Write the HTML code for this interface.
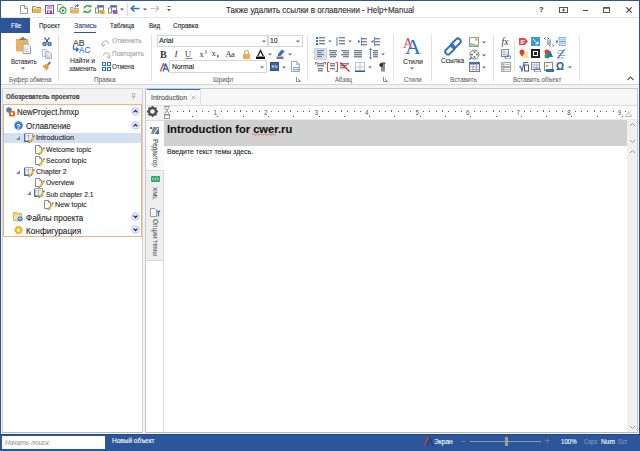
<!DOCTYPE html>
<html><head><meta charset="utf-8">
<style>
*{margin:0;padding:0;box-sizing:border-box}
html,body{width:640px;height:451px;overflow:hidden;background:#fff;font-family:"Liberation Sans",sans-serif;color:#222}
.a{position:absolute;display:block}
.t{position:absolute;white-space:nowrap;line-height:1;-webkit-text-stroke:0.1px currentColor}
</style></head><body>
<div class="a" style="left:0px;top:0px;width:640px;height:451px;background:#fff;"></div>
<div class="a" style="left:1px;top:85px;width:638px;height:349px;background:#f4f4f4;"></div>
<div class="a" style="left:0px;top:0px;width:640px;height:1px;background:#2b579a;"></div>
<div class="a" style="left:0px;top:0px;width:1px;height:451px;background:#2b579a;"></div>
<div class="a" style="left:639px;top:0px;width:1px;height:451px;background:#2b579a;"></div>
<div class="a" style="left:1px;top:17px;width:638px;height:1px;background:#e6e6e6;"></div>
<div class="t" style="left:226px;top:6px;font-size:8.4px;color:#2a2a2a;font-weight:normal;font-style:normal;transform:scaleX(0.951);transform-origin:0 0;">Также удалить ссылки в оглавлении - Help+Manual</div>
<svg class="a" style="left:20px;top:5px;" width="8" height="9" viewBox="0 0 8 9"><path d="M0.5 0.5H5L7.5 3V8.5H0.5Z" fill="#fff" stroke="#9a9a9a"/><path d="M4.5 0.5V3.5H7.5" fill="none" stroke="#9a9a9a"/></svg>
<svg class="a" style="left:32px;top:5px;" width="10" height="8" viewBox="0 0 10 8"><path d="M0.5 1.5H3.5L4.5 2.5H8.5V7.5H0.5Z" fill="#eee" stroke="#8a8a8a"/><path d="M1.5 3.5H9.8L8.8 7.8H0.5Z" fill="#f0b24a"/></svg>
<svg class="a" style="left:45px;top:5px;" width="9" height="9" viewBox="0 0 9 9"><rect x="0.5" y="0.5" width="8" height="8" fill="#fff" stroke="#8a4bb0" stroke-width="1.1"/><rect x="2" y="0.5" width="5" height="3.5" fill="#c9a6dd"/><rect x="2" y="5.5" width="5" height="3" fill="#8a4bb0"/><rect x="3" y="6.3" width="2" height="1.5" fill="#fff"/></svg>
<svg class="a" style="left:57px;top:4px;" width="10" height="10" viewBox="0 0 10 10"><path d="M0.5 0.5H4.5L6.5 2.5V7.5H0.5Z" fill="#fff" stroke="#999"/><circle cx="6" cy="6.5" r="3.1" fill="#fff" stroke="#3aa14a" stroke-width="1.1"/><path d="M5 4.8L7.8 6.5L5 8.2Z" fill="#2e9a3a"/></svg>
<svg class="a" style="left:70px;top:4px;" width="9" height="10" viewBox="0 0 9 10"><path d="M0.5 3.5H3L4 4.5H8.5V9H0.5Z" fill="#ddd" stroke="#999" stroke-width="0.8"/><rect x="0" y="5.5" width="9" height="3.5" fill="#f0b24a"/><path d="M5 3.5Q5.5 1.2 8 1.5M6.8 0.3L8.3 1.6L6.9 2.6" fill="none" stroke="#2e6fc0" stroke-width="1.1"/></svg>
<svg class="a" style="left:83px;top:4px;" width="9" height="10" viewBox="0 0 9 10"><path d="M1.3 4.5A3.3 3.3 0 0 1 7.3 3" fill="none" stroke="#3aa14a" stroke-width="1.6"/><path d="M7.7 5.5A3.3 3.3 0 0 1 1.7 7" fill="none" stroke="#3aa14a" stroke-width="1.6"/><path d="M5.5 3.2H8.5V0.5Z" fill="#3aa14a"/><path d="M3.5 6.8H0.5V9.5Z" fill="#3aa14a"/></svg>
<svg class="a" style="left:95px;top:5px;" width="10" height="9" viewBox="0 0 10 9"><rect x="2.5" y="0.5" width="6" height="6" fill="#fff" stroke="#888"/><rect x="3" y="1" width="5" height="1.5" fill="#2e6fc0"/><rect x="0.5" y="3" width="3" height="5" fill="#fff" stroke="#888"/><rect x="5" y="5" width="4.5" height="4" fill="#e8a73c"/></svg>
<svg class="a" style="left:108px;top:5px;" width="10" height="9" viewBox="0 0 10 9"><rect x="2.5" y="0.5" width="6" height="6" fill="#fff" stroke="#888"/><rect x="3" y="1" width="5" height="1.5" fill="#2e6fc0"/><rect x="0.5" y="3" width="3" height="5" fill="#fff" stroke="#888"/><rect x="5" y="5" width="4.5" height="4" fill="#9a5cc0"/></svg>
<svg class="a" style="left:120px;top:8px;" width="4" height="3" viewBox="0 0 4 3"><path d="M0 0.5H4L2 2.5Z" fill="#555"/></svg>
<div class="a" style="left:127px;top:3px;width:1px;height:13px;background:#dadada;"></div>
<svg class="a" style="left:130px;top:5px;" width="10" height="7" viewBox="0 0 10 7"><path d="M9.5 3.5H1.5M4.5 0.5L1.2 3.5L4.5 6.5" fill="none" stroke="#2e6fc0" stroke-width="1.5"/></svg>
<svg class="a" style="left:143px;top:8px;" width="4" height="3" viewBox="0 0 4 3"><path d="M0 0.5H4L2 2.5Z" fill="#555"/></svg>
<svg class="a" style="left:150px;top:5px;" width="10" height="7" viewBox="0 0 10 7"><path d="M0.5 3.5H8.5M5.5 0.5L8.8 3.5L5.5 6.5" fill="none" stroke="#c4c4c4" stroke-width="1.2"/></svg>
<svg class="a" style="left:167px;top:6px;" width="4" height="6" viewBox="0 0 4 6"><rect x="0.5" y="0" width="3" height="1" fill="#666"/><path d="M0 3H4L2 5.5Z" fill="#666"/></svg>
<div class="t" style="left:539px;top:6px;font-size:7.5px;color:#444;font-weight:bold;font-style:normal;">?</div>
<svg class="a" style="left:559px;top:7px;" width="9" height="6" viewBox="0 0 9 6"><rect x="0.5" y="0.5" width="8" height="5" fill="none" stroke="#555"/><path d="M4.5 1.5V4.5M3 3H6" stroke="#555"/></svg>
<div class="a" style="left:583px;top:10px;width:5px;height:1px;background:#444;"></div>
<svg class="a" style="left:603px;top:7px;" width="7" height="6" viewBox="0 0 7 6"><rect x="0.5" y="0.5" width="6" height="5" fill="none" stroke="#555"/><rect x="0.5" y="0.5" width="6" height="1.2" fill="#555"/></svg>
<svg class="a" style="left:626px;top:7px;" width="6" height="6" viewBox="0 0 6 6"><path d="M0.3 0.3L5.7 5.7M5.7 0.3L0.3 5.7" stroke="#444" stroke-width="1.1"/></svg>
<div class="a" style="left:1px;top:18px;width:29px;height:15px;background:#2b579a;"></div>
<div class="t" style="left:11px;top:23px;font-size:6.6px;color:#fff;font-weight:normal;font-style:normal;transform:scaleX(0.963);transform-origin:0 0;">File</div>
<div class="t" style="left:39px;top:23px;font-size:6.5px;color:#222;font-weight:normal;font-style:normal;transform:scaleX(0.984);transform-origin:0 0;">Проект</div>
<div class="t" style="left:74px;top:23px;font-size:6.5px;color:#1f3f78;font-weight:normal;font-style:normal;transform:scaleX(1.054);transform-origin:0 0;">Запись</div>
<div class="a" style="left:74px;top:32px;width:22px;height:1px;background:#2b579a;"></div>
<div class="t" style="left:110px;top:23px;font-size:6.5px;color:#222;font-weight:normal;font-style:normal;transform:scaleX(0.946);transform-origin:0 0;">Таблица</div>
<div class="t" style="left:149px;top:23px;font-size:6.5px;color:#222;font-weight:normal;font-style:normal;transform:scaleX(0.942);transform-origin:0 0;">Вид</div>
<div class="t" style="left:173px;top:23px;font-size:6.5px;color:#222;font-weight:normal;font-style:normal;transform:scaleX(0.992);transform-origin:0 0;">Справка</div>
<div class="a" style="left:1px;top:84px;width:638px;height:1px;background:#d5d5d5;"></div>
<div class="a" style="left:58px;top:34px;width:1px;height:47px;background:#e2e2e2;"></div>
<div class="a" style="left:151px;top:34px;width:1px;height:47px;background:#e2e2e2;"></div>
<div class="a" style="left:307px;top:34px;width:1px;height:47px;background:#e2e2e2;"></div>
<div class="a" style="left:393px;top:34px;width:1px;height:47px;background:#e2e2e2;"></div>
<div class="a" style="left:431px;top:34px;width:1px;height:47px;background:#e2e2e2;"></div>
<div class="a" style="left:493px;top:34px;width:1px;height:47px;background:#e2e2e2;"></div>
<div class="a" style="left:579px;top:34px;width:1px;height:47px;background:#e2e2e2;"></div>
<div class="t" style="left:9px;top:77px;font-size:6.4px;color:#6a6a6a;font-weight:normal;font-style:normal;transform:scaleX(0.977);transform-origin:0 0;">Буфер обмена</div>
<div class="t" style="left:94px;top:77px;font-size:6.4px;color:#6a6a6a;font-weight:normal;font-style:normal;transform:scaleX(0.994);transform-origin:0 0;">Правка</div>
<div class="t" style="left:213px;top:77px;font-size:6.4px;color:#6a6a6a;font-weight:normal;font-style:normal;transform:scaleX(0.976);transform-origin:0 0;">Шрифт</div>
<div class="t" style="left:335px;top:77px;font-size:6.4px;color:#6a6a6a;font-weight:normal;font-style:normal;transform:scaleX(0.955);transform-origin:0 0;">Абзац</div>
<div class="t" style="left:404px;top:77px;font-size:6.4px;color:#6a6a6a;font-weight:normal;font-style:normal;transform:scaleX(0.962);transform-origin:0 0;">Стили</div>
<div class="t" style="left:450px;top:77px;font-size:6.4px;color:#6a6a6a;font-weight:normal;font-style:normal;transform:scaleX(0.987);transform-origin:0 0;">Вставить</div>
<div class="t" style="left:513px;top:77px;font-size:6.4px;color:#6a6a6a;font-weight:normal;font-style:normal;transform:scaleX(0.985);transform-origin:0 0;">Вставить объект</div>
<svg class="a" style="left:296px;top:77px;" width="5" height="5" viewBox="0 0 5 5"><path d="M0.5 0V4.5H4.5" fill="none" stroke="#888"/><path d="M2 2L4.5 4.5" stroke="#888"/></svg>
<svg class="a" style="left:383px;top:77px;" width="5" height="5" viewBox="0 0 5 5"><path d="M0.5 0V4.5H4.5" fill="none" stroke="#888"/><path d="M2 2L4.5 4.5" stroke="#888"/></svg>
<svg class="a" style="left:627px;top:76px;" width="7" height="5" viewBox="0 0 7 5"><path d="M0.5 4L3.5 1L6.5 4" fill="none" stroke="#555" stroke-width="1.1"/></svg>
<svg class="a" style="left:15px;top:36px;" width="17" height="19" viewBox="0 0 17 19"><rect x="1" y="3" width="12.5" height="12.5" fill="#ebb15e"/><path d="M4.5 4V2.5H6L7.3 1H8.2L9.5 2.5H11V4Z" fill="#7a7a7a"/><path d="M8 8H12.5L15.5 11V17.5H8Z" fill="#fff" stroke="#9a9a9a"/><path d="M10 10.5V15.5H13.5M11.5 12H13.5M11.5 13.5H13" fill="none" stroke="#9dbde3" stroke-width="0.9"/></svg>
<div class="t" style="left:11px;top:59px;font-size:6.5px;color:#333;font-weight:normal;font-style:normal;transform:scaleX(0.934);transform-origin:0 0;">Вставить</div>
<svg class="a" style="left:21px;top:67px;" width="4" height="3" viewBox="0 0 4 3"><path d="M0 0.5H4L2 2.5Z" fill="#666"/></svg>
<svg class="a" style="left:42px;top:37px;" width="10" height="9" viewBox="0 0 10 9"><path d="M2.5 0.5L6.2 5.5M7.5 0.5L3.8 5.5" stroke="#444" stroke-width="1.1"/><circle cx="2.5" cy="7" r="1.6" fill="#8db3e6" stroke="#2e6fc0" stroke-width="1.3"/><circle cx="7.5" cy="7" r="1.6" fill="#8db3e6" stroke="#2e6fc0" stroke-width="1.3"/></svg>
<svg class="a" style="left:42px;top:49px;" width="10" height="10" viewBox="0 0 10 10"><path d="M0.5 0.5H4L6 2.5V7.5H0.5Z" fill="#eef3fa" stroke="#b5bcc6"/><path d="M3.5 2.5H7L9.5 5V9.5H3.5Z" fill="#dfe9f6" stroke="#a9b4c4"/><path d="M5 5.5V8H8" fill="none" stroke="#9dbde3" stroke-width="0.8"/></svg>
<svg class="a" style="left:42px;top:61px;" width="10" height="10" viewBox="0 0 10 10"><path d="M0.5 5.5L4.5 9.5L7 6L4 3Z" fill="#ef8a2a"/><path d="M2 5.5L4.5 8" stroke="#fff" stroke-width="0.6"/><path d="M5.5 4L8.5 1" stroke="#777" stroke-width="1.8"/></svg>
<div class="t" style="left:73px;top:39px;font-size:8.5px;color:#3a3a3a;font-weight:normal;font-style:normal;transform:scaleX(1.006);transform-origin:0 0;">AB</div>
<svg class="a" style="left:72px;top:46px;" width="8" height="7" viewBox="0 0 8 7"><path d="M1.5 0V2.5Q1.5 3.5 3 3.5H6M4.2 1.5L6.3 3.5L4.2 5.5" fill="none" stroke="#2e6fc0" stroke-width="1.3"/></svg>
<div class="t" style="left:79px;top:46px;font-size:8.5px;color:#2e6fc0;font-weight:normal;font-style:normal;transform:scaleX(0.954);transform-origin:0 0;">AC</div>
<div class="t" style="left:70px;top:58px;font-size:6.5px;color:#333;font-weight:normal;font-style:normal;transform:scaleX(1.043);transform-origin:0 0;">Найти и</div>
<div class="t" style="left:69px;top:66px;font-size:6.5px;color:#333;font-weight:normal;font-style:normal;transform:scaleX(0.969);transform-origin:0 0;">заменить</div>
<svg class="a" style="left:101px;top:39px;" width="10" height="8" viewBox="0 0 10 8"><path d="M2 6.5A3 3 0 1 1 7.5 5" fill="none" stroke="#c0c0c0" stroke-width="1.1"/><path d="M0.5 4.5L2.2 7.5L4 5" fill="none" stroke="#c0c0c0" stroke-width="1.1"/></svg>
<div class="t" style="left:112px;top:38px;font-size:6.5px;color:#a0a0a0;font-weight:normal;font-style:normal;transform:scaleX(0.994);transform-origin:0 0;">Отменить</div>
<svg class="a" style="left:101px;top:51px;" width="10" height="8" viewBox="0 0 10 8"><path d="M8 6.5A3 3 0 1 0 2.5 5" fill="none" stroke="#c0c0c0" stroke-width="1.1"/><path d="M9.5 4.5L7.8 7.5L6 5" fill="none" stroke="#c0c0c0" stroke-width="1.1"/></svg>
<div class="t" style="left:112px;top:51px;font-size:6.5px;color:#a0a0a0;font-weight:normal;font-style:normal;transform:scaleX(1.002);transform-origin:0 0;">Повторить</div>
<svg class="a" style="left:102px;top:62px;" width="9" height="9" viewBox="0 0 9 9"><rect x="0.5" y="0.5" width="3" height="3" fill="none" stroke="#2e6fc0"/><rect x="5.5" y="0.5" width="3" height="3" fill="none" stroke="#2e6fc0"/><rect x="0.5" y="5.5" width="3" height="3" fill="none" stroke="#2e6fc0"/><rect x="5.5" y="5.5" width="3" height="3" fill="none" stroke="#2e6fc0"/></svg>
<div class="t" style="left:112px;top:64px;font-size:6.5px;color:#333;font-weight:normal;font-style:normal;transform:scaleX(0.953);transform-origin:0 0;">Отмена</div>
<div class="a" style="left:157px;top:35px;width:111px;height:12px;background:#fff;border:1px solid #d6d6d6;"></div>
<div class="t" style="left:159px;top:38px;font-size:6.8px;color:#222;font-weight:normal;font-style:normal;transform:scaleX(1.062);transform-origin:0 0;">Arial</div>
<svg class="a" style="left:262px;top:40px;" width="4" height="3" viewBox="0 0 4 3"><path d="M0 0.5H4L2 2.5Z" fill="#666"/></svg>
<div class="a" style="left:268px;top:35px;width:35px;height:12px;background:#fff;border:1px solid #d6d6d6;"></div>
<div class="t" style="left:270px;top:38px;font-size:6.8px;color:#222;font-weight:normal;font-style:normal;">10</div>
<svg class="a" style="left:296px;top:40px;" width="4" height="3" viewBox="0 0 4 3"><path d="M0 0.5H4L2 2.5Z" fill="#666"/></svg>
<svg class="a" style="left:159px;top:49px;" width="10" height="10" viewBox="0 0 10 10"><text x="1" y="8.5" font-size="10" font-weight="bold" fill="#333" font-family="Liberation Serif">B</text></svg>
<svg class="a" style="left:172px;top:49px;" width="10" height="10" viewBox="0 0 10 10"><text x="2.5" y="8" font-size="9" font-style="italic" fill="#333" font-family="Liberation Serif">I</text></svg>
<svg class="a" style="left:184px;top:49px;" width="10" height="11" viewBox="0 0 10 11"><text x="1" y="8" font-size="8.5" fill="#444" font-family="Liberation Serif">U</text><rect x="1.5" y="9" width="7" height="0.8" fill="#666"/></svg>
<svg class="a" style="left:199px;top:49px;" width="9" height="10" viewBox="0 0 9 10"><text x="0.5" y="8" font-size="8.5" fill="#333" font-family="Liberation Serif">x</text><rect x="6.5" y="1.5" width="1" height="3" fill="#2e6fc0"/></svg>
<svg class="a" style="left:211px;top:49px;" width="9" height="10" viewBox="0 0 9 10"><text x="0.5" y="6.5" font-size="8.5" fill="#333" font-family="Liberation Serif">x</text><rect x="6" y="6" width="1.5" height="2.5" fill="#2e6fc0"/></svg>
<svg class="a" style="left:225px;top:49px;" width="11" height="10" viewBox="0 0 11 10"><text x="0.5" y="8" font-size="8.5" fill="#333" font-family="Liberation Serif" letter-spacing="-0.6">Aa</text></svg>
<svg class="a" style="left:243px;top:50px;" width="7" height="9" viewBox="0 0 7 9"><path d="M1.5 4V2.5A2 2 0 0 1 5.5 2.5V4" fill="none" stroke="#e9ad52" stroke-width="1.2"/><rect x="0" y="4" width="7" height="5" fill="#e9ad52"/></svg>
<svg class="a" style="left:256px;top:49px;" width="9" height="10" viewBox="0 0 9 10"><path d="M4.5 0L8 7H6.5L4.5 3L2.5 7H1Z" fill="#222"/><rect x="0" y="7.5" width="9" height="2.5" fill="#111"/></svg>
<svg class="a" style="left:268px;top:53px;" width="4" height="3" viewBox="0 0 4 3"><path d="M0 0.5H4L2 2.5Z" fill="#666"/></svg>
<svg class="a" style="left:276px;top:49px;" width="9" height="10" viewBox="0 0 9 10"><path d="M2 5L6 0.5L8.5 2.5L4.5 7H2Z" fill="#2e6fc0"/><rect x="0.5" y="7.5" width="7" height="2.5" fill="#777"/></svg>
<svg class="a" style="left:288px;top:53px;" width="4" height="3" viewBox="0 0 4 3"><path d="M0 0.5H4L2 2.5Z" fill="#666"/></svg>
<svg class="a" style="left:160px;top:63px;" width="9" height="9" viewBox="0 0 9 9"><path d="M0.5 8.5L3.5 0.5L4.5 3" fill="none" stroke="#d9453a" stroke-width="1.3"/><path d="M3 8.5L5.8 1L8.7 8.5M4 6H7.6" fill="none" stroke="#2e6fc0" stroke-width="1.3"/></svg>
<div class="a" style="left:169px;top:60px;width:98px;height:13px;background:#fff;border:1px solid #d6d6d6;"></div>
<div class="t" style="left:172px;top:64px;font-size:6.8px;color:#222;font-weight:normal;font-style:normal;transform:scaleX(1.003);transform-origin:0 0;">Normal</div>
<svg class="a" style="left:260px;top:66px;" width="4" height="3" viewBox="0 0 4 3"><path d="M0 0.5H4L2 2.5Z" fill="#666"/></svg>
<svg class="a" style="left:270px;top:62px;" width="9" height="9" viewBox="0 0 9 9"><rect x="0" y="0" width="9" height="9" fill="#2b4f8f"/><rect x="1" y="1" width="7" height="7" fill="#3c64a8"/><text x="4.5" y="6.3" font-size="4" fill="#fff" text-anchor="middle" font-family="Liberation Sans">EN</text></svg>
<svg class="a" style="left:282px;top:66px;" width="4" height="3" viewBox="0 0 4 3"><path d="M0 0.5H4L2 2.5Z" fill="#666"/></svg>
<svg class="a" style="left:291px;top:61px;" width="10" height="11" viewBox="0 0 10 11"><path d="M0.5 0.5H5.5L8.5 3.5V10.5H0.5Z" fill="#fff" stroke="#9ab"/><path d="M5.5 0.5V3.5H8.5" fill="none" stroke="#9ab" stroke-width="0.8"/><rect x="2" y="6" width="7" height="3.5" fill="#8fb4e0"/><rect x="3" y="7" width="4" height="1" fill="#e8f0fa"/></svg>
<svg class="a" style="left:316px;top:37px;" width="9" height="9" viewBox="0 0 9 9"><rect x="0" y="0" width="2" height="2" fill="#2e6fc0"/><rect x="0" y="3" width="2" height="2" fill="#2e6fc0"/><rect x="0" y="6" width="2" height="2" fill="#2e6fc0"/><rect x="3" y="0" width="6" height="1" fill="#7d8590"/><rect x="3" y="1" width="6" height="1" fill="#c9ced6"/><rect x="3" y="3" width="6" height="1" fill="#7d8590"/><rect x="3" y="4" width="6" height="1" fill="#c9ced6"/><rect x="3" y="6" width="6" height="1" fill="#7d8590"/><rect x="3" y="7" width="6" height="1" fill="#c9ced6"/></svg>
<svg class="a" style="left:328px;top:40px;" width="4" height="3" viewBox="0 0 4 3"><path d="M0 0.5H4L2 2.5Z" fill="#777"/></svg>
<svg class="a" style="left:336px;top:37px;" width="9" height="9" viewBox="0 0 9 9"><rect x="0.5" y="0" width="1" height="9" fill="#4a7fc8"/><rect x="3" y="0" width="6" height="1" fill="#7d8590"/><rect x="3" y="1" width="6" height="1" fill="#c9ced6"/><rect x="3" y="3" width="6" height="1" fill="#7d8590"/><rect x="3" y="4" width="6" height="1" fill="#c9ced6"/><rect x="3" y="6" width="6" height="1" fill="#7d8590"/><rect x="3" y="7" width="6" height="1" fill="#c9ced6"/></svg>
<svg class="a" style="left:348px;top:40px;" width="4" height="3" viewBox="0 0 4 3"><path d="M0 0.5H4L2 2.5Z" fill="#777"/></svg>
<svg class="a" style="left:358px;top:37px;" width="9" height="9" viewBox="0 0 9 9"><path d="M0 3L2.5 4.5L0 6Z" fill="#2e6fc0"/><rect x="3" y="0" width="1" height="9" fill="#5b8fd0"/><rect x="4" y="1" width="5" height="1" fill="#7d8590"/><rect x="4" y="2" width="5" height="1" fill="#c9ced6"/><rect x="4" y="4" width="5" height="1" fill="#7d8590"/><rect x="4" y="5" width="5" height="1" fill="#c9ced6"/><rect x="4" y="7" width="5" height="1" fill="#7d8590"/><rect x="4" y="8" width="5" height="1" fill="#c9ced6"/></svg>
<svg class="a" style="left:371px;top:37px;" width="9" height="9" viewBox="0 0 9 9"><path d="M2.5 3L0 4.5L2.5 6Z" fill="#2e6fc0"/><rect x="3" y="0" width="1" height="9" fill="#5b8fd0"/><rect x="4" y="1" width="5" height="1" fill="#7d8590"/><rect x="4" y="2" width="5" height="1" fill="#c9ced6"/><rect x="4" y="4" width="5" height="1" fill="#7d8590"/><rect x="4" y="5" width="5" height="1" fill="#c9ced6"/><rect x="4" y="7" width="5" height="1" fill="#7d8590"/><rect x="4" y="8" width="5" height="1" fill="#c9ced6"/></svg>
<div class="a" style="left:314px;top:48px;width:13px;height:12px;background:#d5e1f2;border:1px solid #c5d5ec;"></div>
<svg class="a" style="left:317px;top:50px;" width="8" height="8" viewBox="0 0 8 8"><rect x="0" y="0" width="7" height="1" fill="#7d8590"/><rect x="0" y="1" width="7" height="1" fill="#c9ced6"/><rect x="0" y="2" width="5" height="1" fill="#7d8590"/><rect x="0" y="3" width="5" height="1" fill="#c9ced6"/><rect x="0" y="4" width="7" height="1" fill="#7d8590"/><rect x="0" y="5" width="7" height="1" fill="#c9ced6"/><rect x="0" y="6" width="5" height="1" fill="#7d8590"/><rect x="0" y="7" width="5" height="1" fill="#c9ced6"/></svg>
<svg class="a" style="left:329px;top:50px;" width="8" height="8" viewBox="0 0 8 8"><rect x="0" y="0" width="8" height="1" fill="#7d8590"/><rect x="0" y="1" width="8" height="1" fill="#c9ced6"/><rect x="1" y="2" width="6" height="1" fill="#7d8590"/><rect x="1" y="3" width="6" height="1" fill="#c9ced6"/><rect x="0" y="4" width="8" height="1" fill="#7d8590"/><rect x="0" y="5" width="8" height="1" fill="#c9ced6"/><rect x="1" y="6" width="6" height="1" fill="#7d8590"/><rect x="1" y="7" width="6" height="1" fill="#c9ced6"/></svg>
<svg class="a" style="left:341px;top:50px;" width="8" height="8" viewBox="0 0 8 8"><rect x="0" y="0" width="8" height="1" fill="#7d8590"/><rect x="0" y="1" width="8" height="1" fill="#c9ced6"/><rect x="2" y="2" width="6" height="1" fill="#7d8590"/><rect x="2" y="3" width="6" height="1" fill="#c9ced6"/><rect x="0" y="4" width="8" height="1" fill="#7d8590"/><rect x="0" y="5" width="8" height="1" fill="#c9ced6"/><rect x="2" y="6" width="6" height="1" fill="#7d8590"/><rect x="2" y="7" width="6" height="1" fill="#c9ced6"/></svg>
<svg class="a" style="left:354px;top:50px;" width="8" height="8" viewBox="0 0 8 8"><rect x="0" y="0" width="8" height="1" fill="#7d8590"/><rect x="0" y="1" width="8" height="1" fill="#c9ced6"/><rect x="0" y="2" width="8" height="1" fill="#7d8590"/><rect x="0" y="3" width="8" height="1" fill="#c9ced6"/><rect x="0" y="4" width="8" height="1" fill="#7d8590"/><rect x="0" y="5" width="8" height="1" fill="#c9ced6"/><rect x="0" y="6" width="8" height="1" fill="#7d8590"/><rect x="0" y="7" width="8" height="1" fill="#c9ced6"/></svg>
<svg class="a" style="left:369px;top:48px;" width="9" height="12" viewBox="0 0 9 12"><path d="M1.5 0L3 2H0Z M1.5 11.5L3 9.5H0Z" fill="#2e6fc0"/><rect x="1" y="2" width="1" height="7.5" fill="#5b8fd0"/><rect x="4" y="2" width="5" height="1" fill="#7d8590"/><rect x="4" y="3" width="5" height="1" fill="#c9ced6"/><rect x="4" y="4" width="5" height="1" fill="#7d8590"/><rect x="4" y="5" width="5" height="1" fill="#c9ced6"/><rect x="4" y="6" width="5" height="1" fill="#7d8590"/><rect x="4" y="7" width="5" height="1" fill="#c9ced6"/><rect x="4" y="8" width="5" height="1" fill="#7d8590"/><rect x="4" y="9" width="5" height="1" fill="#c9ced6"/></svg>
<svg class="a" style="left:381px;top:53px;" width="4" height="3" viewBox="0 0 4 3"><path d="M0 0.5H4L2 2.5Z" fill="#777"/></svg>
<svg class="a" style="left:315px;top:62px;" width="11" height="10" viewBox="0 0 11 10"><path d="M0.5 2.5V0.5H2.5M8.5 0.5H10.5V2.5" fill="none" stroke="#e0453a"/><rect x="2" y="1" width="7" height="1" fill="#7d8590"/><rect x="2" y="2" width="7" height="1" fill="#c9ced6"/><rect x="2" y="3" width="7" height="1" fill="#7d8590"/><rect x="2" y="4" width="7" height="1" fill="#c9ced6"/><rect x="3" y="6" width="5" height="1" fill="#7d8590"/><rect x="3" y="7" width="5" height="1" fill="#c9ced6"/><rect x="3" y="8" width="5" height="1" fill="#7d8590"/><rect x="3" y="9" width="5" height="1" fill="#c9ced6"/></svg>
<svg class="a" style="left:327px;top:62px;" width="11" height="10" viewBox="0 0 11 10"><path d="M2.5 0.5H0.5V9.5H2.5M8.5 0.5H10.5V9.5H8.5" fill="none" stroke="#e0453a"/><rect x="3" y="1" width="5" height="1" fill="#7d8590"/><rect x="3" y="2" width="5" height="1" fill="#c9ced6"/><rect x="3" y="3" width="5" height="1" fill="#7d8590"/><rect x="3" y="4" width="5" height="1" fill="#c9ced6"/><rect x="3" y="6" width="5" height="1" fill="#7d8590"/><rect x="3" y="7" width="5" height="1" fill="#c9ced6"/></svg>
<svg class="a" style="left:340px;top:62px;" width="11" height="10" viewBox="0 0 11 10"><rect x="0" y="1" width="7" height="1" fill="#7d8590"/><rect x="0" y="2" width="7" height="1" fill="#c9ced6"/><rect x="0" y="3" width="7" height="1" fill="#7d8590"/><rect x="0" y="4" width="7" height="1" fill="#c9ced6"/><rect x="0" y="5" width="5" height="1" fill="#7d8590"/><rect x="0" y="6" width="5" height="1" fill="#c9ced6"/><path d="M0.5 0.5L9.5 9.5" stroke="#e0201a" stroke-width="1.3"/><path d="M8 0.5V3M6.8 1.8H9.2" stroke="#2e6fc0" stroke-width="0.8"/></svg>
<svg class="a" style="left:355px;top:62px;" width="10" height="10" viewBox="0 0 10 10"><rect x="0.5" y="0.5" width="9" height="9" fill="#fff" stroke="#c0c0c0"/><path d="M5 0.5V9M0.5 5H9.5" stroke="#c0c0c0"/><rect x="0" y="8.5" width="10" height="1.5" fill="#2e5a9a"/></svg>
<svg class="a" style="left:368px;top:66px;" width="4" height="3" viewBox="0 0 4 3"><path d="M0 0.5H4L2 2.5Z" fill="#777"/></svg>
<svg class="a" style="left:378px;top:62px;" width="8" height="10" viewBox="0 0 8 10"><path d="M3.5 1H7.5M4 1V9.5M6 1V9.5" stroke="#333" stroke-width="1.1"/><circle cx="3.2" cy="3" r="1.9" fill="#333"/></svg>
<svg class="a" style="left:400px;top:36px;" width="24" height="20" viewBox="0 0 24 20"><text x="3" y="12" font-size="14" fill="#d9453a" font-family="Liberation Serif">A</text><text x="5" y="18" font-size="22" fill="#2e6fc0" font-family="Liberation Serif" stroke="#fff" stroke-width="0.4" paint-order="stroke">A</text></svg>
<div class="t" style="left:403px;top:59px;font-size:6.6px;color:#333;font-weight:normal;font-style:normal;transform:scaleX(1.042);transform-origin:0 0;">Стили</div>
<svg class="a" style="left:410px;top:67px;" width="4" height="3" viewBox="0 0 4 3"><path d="M0 0.5H4L2 2.5Z" fill="#666"/></svg>
<svg class="a" style="left:443px;top:37px;" width="20" height="19" viewBox="0 0 20 19"><rect x="7.5" y="3.5" width="11" height="5.5" rx="2.75" fill="none" stroke="#2e6fc0" stroke-width="2" transform="rotate(-45 13 6.25)"/><rect x="1.5" y="10" width="11" height="5.5" rx="2.75" fill="none" stroke="#2e6fc0" stroke-width="2" transform="rotate(-45 7 12.75)"/></svg>
<div class="t" style="left:441px;top:58px;font-size:6.6px;color:#333;font-weight:normal;font-style:normal;transform:scaleX(0.997);transform-origin:0 0;">Ссылка</div>
<svg class="a" style="left:469px;top:37px;" width="11" height="10" viewBox="0 0 11 10"><rect x="0.5" y="0.5" width="9" height="9" fill="#fff" stroke="#9a9a9a"/><path d="M1 9V6Q4 5.5 6 7T9 7V9Z" fill="#92cfa6"/><circle cx="7.3" cy="2.5" r="1.2" fill="#f0a030"/></svg>
<svg class="a" style="left:482px;top:41px;" width="4" height="3" viewBox="0 0 4 3"><path d="M0 0.5H4L2 2.5Z" fill="#666"/></svg>
<svg class="a" style="left:469px;top:49px;" width="11" height="11" viewBox="0 0 11 11"><circle cx="5.5" cy="5.5" r="4.5" fill="#fff" stroke="#777"/><circle cx="5.5" cy="3" r="1.1" fill="#777"/><circle cx="5.5" cy="8" r="1.1" fill="#777"/><circle cx="3" cy="5.5" r="1.1" fill="#777"/><circle cx="8" cy="5.5" r="1.1" fill="#777"/><path d="M0.5 10.5L3 8" stroke="#2e6fc0" stroke-width="1.2"/></svg>
<svg class="a" style="left:482px;top:54px;" width="4" height="3" viewBox="0 0 4 3"><path d="M0 0.5H4L2 2.5Z" fill="#666"/></svg>
<svg class="a" style="left:469px;top:62px;" width="11" height="10" viewBox="0 0 11 10"><rect x="0.5" y="0.5" width="10" height="9" fill="#fff" stroke="#777"/><rect x="0.5" y="0.5" width="10" height="2" fill="#2e6fc0"/><path d="M0.5 5H10.5M0.5 7.5H10.5M4 2.5V9.5M7.3 2.5V9.5" stroke="#999" stroke-width="0.8"/></svg>
<svg class="a" style="left:482px;top:66px;" width="4" height="3" viewBox="0 0 4 3"><path d="M0 0.5H4L2 2.5Z" fill="#666"/></svg>
<svg class="a" style="left:501px;top:37px;" width="11" height="10" viewBox="0 0 11 10"><text x="0.5" y="8" font-size="9.5" font-style="italic" fill="#333" font-family="Liberation Serif">fx</text></svg>
<svg class="a" style="left:501px;top:49px;" width="10" height="10" viewBox="0 0 10 10"><rect x="0.5" y="0.5" width="7" height="7" fill="#fff" stroke="#888"/><path d="M0.5 3H7.5M0.5 5.3H7.5M3 0.5V7.5" stroke="#aaa" stroke-width="0.8"/><rect x="4" y="7" width="6" height="3" rx="1.5" fill="none" stroke="#2e6fc0"/></svg>
<svg class="a" style="left:501px;top:62px;" width="10" height="10" viewBox="0 0 10 10"><rect x="0.5" y="0.5" width="9" height="4" fill="#f4f4f4" stroke="#aaa"/><rect x="0.5" y="5.5" width="9" height="4" fill="#f4f4f4" stroke="#aaa"/><rect x="1.5" y="1.5" width="2" height="2" fill="#999"/><rect x="1.5" y="6.5" width="2" height="2" fill="#999"/><rect x="4.5" y="2" width="4" height="1" fill="#bbb"/><rect x="4.5" y="7" width="4" height="1" fill="#bbb"/></svg>
<div class="a" style="left:514px;top:41px;width:1px;height:30px;background:#e2e2e2;"></div>
<svg class="a" style="left:519px;top:37px;" width="9" height="9" viewBox="0 0 9 9"><path d="M0 1H6L9 4.5L6 8H0Z" fill="#e24a4a"/><text x="1.5" y="6.5" font-size="5" fill="#fff" font-family="Liberation Sans" font-weight="bold">IF</text></svg>
<svg class="a" style="left:519px;top:49px;" width="9" height="10" viewBox="0 0 9 10"><rect x="3" y="3" width="6" height="6" fill="#f4e59a"/><path d="M3 0.5A2.5 2.5 0 0 1 5.5 3C5.5 5 3 7.5 3 7.5S0.5 5 0.5 3A2.5 2.5 0 0 1 3 0.5Z" fill="#e03c31"/></svg>
<svg class="a" style="left:519px;top:62px;" width="10" height="10" viewBox="0 0 10 10"><path d="M0 5L1.5 4.5L3 9L5 0.5H9.5" fill="none" stroke="#2e6fc0" stroke-width="1.1"/><rect x="5.5" y="3" width="4" height="6" fill="none" stroke="#555"/></svg>
<svg class="a" style="left:531px;top:37px;" width="9" height="9" viewBox="0 0 9 9"><rect x="0" y="0" width="9" height="9" fill="#3d9ad8"/><path d="M2 2L7 7M4.5 7H7V4.5" fill="none" stroke="#fff" stroke-width="1"/></svg>
<svg class="a" style="left:531px;top:49px;" width="9" height="10" viewBox="0 0 9 10"><rect x="0" y="0" width="9" height="9" fill="#222"/><rect x="2" y="2" width="5" height="5" fill="#fff"/><rect x="3" y="3" width="3" height="3" fill="#222"/></svg>
<svg class="a" style="left:531px;top:62px;" width="10" height="10" viewBox="0 0 10 10"><rect x="0.5" y="0.5" width="8" height="7" fill="#fff" stroke="#888"/><path d="M0.5 3H8.5M0.5 5.3H8.5M3.2 0.5V7.5M5.8 0.5V7.5" stroke="#aaa" stroke-width="0.8"/><rect x="3" y="7" width="7" height="3" rx="1.5" fill="none" stroke="#2e6fc0"/></svg>
<svg class="a" style="left:544px;top:37px;" width="10" height="10" viewBox="0 0 10 10"><path d="M1.5 0.5L0.3 1.5L1.5 2.5M3.5 0.5L4.7 1.5L3.5 2.5M6.5 7.5L5.3 8.5L6.5 9.5M8.5 7.5L9.7 8.5L8.5 9.5" fill="none" stroke="#333" stroke-width="0.8"/><rect x="3" y="2.5" width="4" height="5.5" fill="#9fb2cf"/><rect x="4" y="3.5" width="2" height="1" fill="#d6dfeb"/></svg>
<svg class="a" style="left:544px;top:49px;" width="9" height="10" viewBox="0 0 9 10"><circle cx="3" cy="3" r="2.5" fill="#e03c31"/><circle cx="3" cy="7" r="2.5" fill="#2ea14a"/><path d="M6 1L9 8H3Z" fill="#2e6fc0"/></svg>
<svg class="a" style="left:544px;top:62px;" width="10" height="10" viewBox="0 0 10 10"><rect x="0.5" y="0.5" width="8" height="8" fill="#fff" stroke="#888"/><circle cx="3" cy="4" r="1.2" fill="#e8a73c"/><rect x="2" y="7" width="8" height="3" fill="#2e6fc0"/></svg>
<svg class="a" style="left:556px;top:37px;" width="10" height="9" viewBox="0 0 10 9"><rect x="3" y="0.5" width="7" height="2.5" fill="#dbe6f4" stroke="#7aa2d8" stroke-width="0.8"/><rect x="3" y="6" width="7" height="2.5" fill="#dbe6f4" stroke="#7aa2d8" stroke-width="0.8"/><rect x="0" y="3.5" width="2" height="2" fill="#2e6fc0"/><rect x="3" y="4" width="7" height="1" fill="#7aa2d8"/></svg>
<svg class="a" style="left:556px;top:49px;" width="10" height="10" viewBox="0 0 10 10"><path d="M2 1.5H9M1 4H8M2 6.5H9M1 9H8" stroke="#8aa4c8" stroke-width="0.9"/><path d="M8.5 0.5L1.5 9.5" stroke="#2e6fc0" stroke-width="1.1"/></svg>
<div class="t" style="left:556px;top:62px;font-size:10px;color:#2e5a9a;font-weight:bold;font-style:normal;">Ω</div>
<svg class="a" style="left:568px;top:66px;" width="4" height="3" viewBox="0 0 4 3"><path d="M0 0.5H4L2 2.5Z" fill="#666"/></svg>
<div class="a" style="left:2px;top:88px;width:141px;height:345px;background:#fff;border:1px solid #d4d4d4;border-bottom-color:#b8b8b8;"></div>
<div class="a" style="left:3px;top:89px;width:139px;height:15px;background:#f3f3f3;"></div>
<div class="t" style="left:6px;top:94px;font-size:6.6px;color:#3a3a3a;font-weight:bold;font-style:normal;transform:scaleX(0.930);transform-origin:0 0;">Обозреватель проектов</div>
<svg class="a" style="left:131px;top:93px;" width="5" height="7" viewBox="0 0 5 7"><path d="M0.5 0.5H4.5M1.5 1V3.5H3.5V1M0.5 3.8H4.5M2.5 4V6.5" fill="none" stroke="#aaa" stroke-width="0.7"/></svg>
<div class="a" style="left:3px;top:104px;width:139px;height:133px;background:#fff;border:1px solid #f3b27a;"></div>
<div class="a" style="left:4px;top:133px;width:137px;height:10px;background:#d3e0f2;"></div>
<svg class="a" style="left:6px;top:107px;" width="9" height="10" viewBox="0 0 9 10"><circle cx="3" cy="3" r="2.8" fill="#4a7fc8"/><rect x="3" y="4" width="6" height="5.5" rx="1" fill="#e86a1e"/><rect x="5" y="5.5" width="2" height="2.5" fill="#fff"/></svg>
<div class="t" style="left:17px;top:108px;font-size:8.8px;color:#222;font-weight:normal;font-style:normal;transform:scaleX(0.898);transform-origin:0 0;">NewProject.hmxp</div>
<svg class="a" style="left:14px;top:121px;" width="9" height="9" viewBox="0 0 9 9"><circle cx="4.5" cy="4.5" r="4.3" fill="#3b7fd4"/><text x="4.5" y="7.5" font-size="7" fill="#fff" text-anchor="middle" font-weight="bold" font-family="Liberation Sans">?</text></svg>
<div class="t" style="left:26px;top:122px;font-size:8.8px;color:#222;font-weight:normal;font-style:normal;transform:scaleX(0.909);transform-origin:0 0;">Оглавление</div>
<svg class="a" style="left:131px;top:107px;" width="9" height="9" viewBox="0 0 9 9"><circle cx="4.5" cy="4.5" r="3.8" fill="#e3ebf8" stroke="#b4c6e8" stroke-width="0.9"/><path d="M2.6 5.4L4.5 3.5L6.4 5.4" fill="none" stroke="#1c2a7a" stroke-width="1.3"/></svg>
<svg class="a" style="left:131px;top:121px;" width="9" height="9" viewBox="0 0 9 9"><circle cx="4.5" cy="4.5" r="3.8" fill="#e3ebf8" stroke="#b4c6e8" stroke-width="0.9"/><path d="M2.6 5.4L4.5 3.5L6.4 5.4" fill="none" stroke="#1c2a7a" stroke-width="1.3"/></svg>
<svg class="a" style="left:131px;top:212px;" width="9" height="9" viewBox="0 0 9 9"><circle cx="4.5" cy="4.5" r="3.8" fill="#e3ebf8" stroke="#b4c6e8" stroke-width="0.9"/><path d="M2.6 3.6L4.5 5.5L6.4 3.6" fill="none" stroke="#1c2a7a" stroke-width="1.3"/></svg>
<svg class="a" style="left:131px;top:225px;" width="9" height="9" viewBox="0 0 9 9"><circle cx="4.5" cy="4.5" r="3.8" fill="#e3ebf8" stroke="#b4c6e8" stroke-width="0.9"/><path d="M2.6 3.6L4.5 5.5L6.4 3.6" fill="none" stroke="#1c2a7a" stroke-width="1.3"/></svg>
<svg class="a" style="left:16px;top:136px;" width="4" height="4" viewBox="0 0 4 4"><path d="M4 0V4H0Z" fill="#888"/></svg>
<svg class="a" style="left:24px;top:133px;" width="11" height="10" viewBox="0 0 11 10"><rect x="1" y="0.5" width="7.5" height="7" fill="#fff" stroke="#9aa"/><path d="M0.5 1V8.5H8" fill="none" stroke="#4a6fb0" stroke-width="1.2"/><path d="M4.7 1V7" stroke="#aab"/><path d="M2 2.5H4M2 4H4M5.5 2.5H7.5M5.5 4H7.5" stroke="#b8c2d6" stroke-width="0.8"/><path d="M5 9.5L9.5 4.5" stroke="#e8b83a" stroke-width="2"/><path d="M9 4L10.5 2.5" stroke="#e05a4a" stroke-width="1.6"/><path d="M4.6 9.9L4.8 8.6L6 9.6Z" fill="#444"/></svg>
<div class="t" style="left:36px;top:134px;font-size:7.3px;color:#1a1a1a;font-weight:normal;font-style:normal;transform:scaleX(0.998);transform-origin:0 0;">Introduction</div>
<svg class="a" style="left:35px;top:145px;" width="10" height="10" viewBox="0 0 10 10"><path d="M0.5 0.5H4.5L6.5 2.5V8.5H0.5Z" fill="#fff" stroke="#8a8a8a"/><path d="M4.5 0.5V2.5H6.5" fill="none" stroke="#8a8a8a" stroke-width="0.8"/><path d="M4 9.5L8.5 4.5" stroke="#e8b83a" stroke-width="2"/><path d="M8 4L9.5 2.5" stroke="#e05a4a" stroke-width="1.6"/><path d="M3.6 9.9L3.8 8.6L5 9.6Z" fill="#444"/></svg>
<div class="t" style="left:46px;top:146px;font-size:7.0px;color:#222;font-weight:normal;font-style:normal;transform:scaleX(0.986);transform-origin:0 0;">Welcome topic</div>
<svg class="a" style="left:35px;top:156px;" width="10" height="10" viewBox="0 0 10 10"><path d="M0.5 0.5H4.5L6.5 2.5V8.5H0.5Z" fill="#fff" stroke="#8a8a8a"/><path d="M4.5 0.5V2.5H6.5" fill="none" stroke="#8a8a8a" stroke-width="0.8"/><path d="M4 9.5L8.5 4.5" stroke="#e8b83a" stroke-width="2"/><path d="M8 4L9.5 2.5" stroke="#e05a4a" stroke-width="1.6"/><path d="M3.6 9.9L3.8 8.6L5 9.6Z" fill="#444"/></svg>
<div class="t" style="left:46px;top:157px;font-size:7.0px;color:#222;font-weight:normal;font-style:normal;transform:scaleX(0.999);transform-origin:0 0;">Second topic</div>
<svg class="a" style="left:16px;top:170px;" width="4" height="4" viewBox="0 0 4 4"><path d="M4 0V4H0Z" fill="#888"/></svg>
<svg class="a" style="left:24px;top:167px;" width="11" height="10" viewBox="0 0 11 10"><rect x="1" y="0.5" width="7.5" height="7" fill="#fff" stroke="#9aa"/><path d="M0.5 1V8.5H8" fill="none" stroke="#4a6fb0" stroke-width="1.2"/><path d="M4.7 1V7" stroke="#aab"/><path d="M2 2.5H4M2 4H4M5.5 2.5H7.5M5.5 4H7.5" stroke="#b8c2d6" stroke-width="0.8"/><path d="M5 9.5L9.5 4.5" stroke="#e8b83a" stroke-width="2"/><path d="M9 4L10.5 2.5" stroke="#e05a4a" stroke-width="1.6"/><path d="M4.6 9.9L4.8 8.6L6 9.6Z" fill="#444"/></svg>
<div class="t" style="left:36px;top:168px;font-size:7.0px;color:#222;font-weight:normal;font-style:normal;transform:scaleX(0.998);transform-origin:0 0;">Chapter 2</div>
<svg class="a" style="left:35px;top:178px;" width="10" height="10" viewBox="0 0 10 10"><path d="M0.5 0.5H4.5L6.5 2.5V8.5H0.5Z" fill="#fff" stroke="#8a8a8a"/><path d="M4.5 0.5V2.5H6.5" fill="none" stroke="#8a8a8a" stroke-width="0.8"/><path d="M4 9.5L8.5 4.5" stroke="#e8b83a" stroke-width="2"/><path d="M8 4L9.5 2.5" stroke="#e05a4a" stroke-width="1.6"/><path d="M3.6 9.9L3.8 8.6L5 9.6Z" fill="#444"/></svg>
<div class="t" style="left:46px;top:179px;font-size:7.0px;color:#222;font-weight:normal;font-style:normal;transform:scaleX(0.967);transform-origin:0 0;">Overview</div>
<svg class="a" style="left:27px;top:191px;" width="4" height="4" viewBox="0 0 4 4"><path d="M4 0V4H0Z" fill="#888"/></svg>
<svg class="a" style="left:34px;top:188px;" width="11" height="10" viewBox="0 0 11 10"><rect x="1" y="0.5" width="7.5" height="7" fill="#fff" stroke="#9aa"/><path d="M0.5 1V8.5H8" fill="none" stroke="#4a6fb0" stroke-width="1.2"/><path d="M4.7 1V7" stroke="#aab"/><path d="M2 2.5H4M2 4H4M5.5 2.5H7.5M5.5 4H7.5" stroke="#b8c2d6" stroke-width="0.8"/><path d="M5 9.5L9.5 4.5" stroke="#e8b83a" stroke-width="2"/><path d="M9 4L10.5 2.5" stroke="#e05a4a" stroke-width="1.6"/><path d="M4.6 9.9L4.8 8.6L6 9.6Z" fill="#444"/></svg>
<div class="t" style="left:46px;top:191px;font-size:7.0px;color:#222;font-weight:normal;font-style:normal;transform:scaleX(0.963);transform-origin:0 0;">Sub chapter 2.1</div>
<svg class="a" style="left:44px;top:200px;" width="10" height="10" viewBox="0 0 10 10"><path d="M0.5 0.5H4.5L6.5 2.5V8.5H0.5Z" fill="#fff" stroke="#8a8a8a"/><path d="M4.5 0.5V2.5H6.5" fill="none" stroke="#8a8a8a" stroke-width="0.8"/><path d="M4 9.5L8.5 4.5" stroke="#e8b83a" stroke-width="2"/><path d="M8 4L9.5 2.5" stroke="#e05a4a" stroke-width="1.6"/><path d="M3.6 9.9L3.8 8.6L5 9.6Z" fill="#444"/></svg>
<div class="t" style="left:55px;top:201px;font-size:7.2px;color:#222;font-weight:normal;font-style:normal;transform:scaleX(1.003);transform-origin:0 0;">New topic</div>
<svg class="a" style="left:13px;top:211px;" width="11" height="11" viewBox="0 0 11 11"><path d="M0.5 1.5H3.5L4.5 2.5H8.5V9.5H0.5Z" fill="#f0d27a" stroke="#d4aa3a" stroke-width="0.8"/><rect x="1" y="4" width="7" height="5" fill="#f6de92"/><circle cx="7.2" cy="7.8" r="2.6" fill="#3b7fd4"/><path d="M5.5 7.5H9M7.2 5.5V10" stroke="#cfe2fb" stroke-width="0.6"/></svg>
<div class="t" style="left:26px;top:214px;font-size:8.8px;color:#222;font-weight:normal;font-style:normal;transform:scaleX(0.916);transform-origin:0 0;">Файлы проекта</div>
<svg class="a" style="left:14px;top:225px;" width="9" height="10" viewBox="0 0 9 10"><circle cx="4.5" cy="5" r="3.5" fill="#f2c12e" stroke="#e6a817" stroke-width="1.6" stroke-dasharray="1.3 0.9"/><circle cx="4.5" cy="5" r="1.6" fill="#fff6c8"/></svg>
<div class="t" style="left:26px;top:227px;font-size:8.8px;color:#222;font-weight:normal;font-style:normal;transform:scaleX(0.934);transform-origin:0 0;">Конфигурация</div>
<div class="a" style="left:145px;top:88px;width:493px;height:345px;background:#fff;border:1px solid #c8c8c8;border-bottom-color:#b8b8b8;"></div>
<div class="a" style="left:146px;top:89px;width:491px;height:16px;background:#f7f7f7;"></div>
<div class="a" style="left:146px;top:105px;width:491px;height:1px;background:#dcdcdc;"></div>
<div class="a" style="left:147px;top:89px;width:54px;height:16px;background:#f9f9f9;border-right:1px solid #e3e3e3;"></div>
<div class="a" style="left:147px;top:89px;width:53px;height:1px;background:#2b72c8;"></div>
<div class="t" style="left:151px;top:95px;font-size:6.8px;color:#555;font-weight:normal;font-style:normal;transform:scaleX(1.013);transform-origin:0 0;">Introduction</div>
<svg class="a" style="left:191px;top:95px;" width="5" height="5" viewBox="0 0 5 5"><path d="M0.5 0.5L4.5 4.5M4.5 0.5L0.5 4.5" stroke="#999" stroke-width="0.8"/></svg>
<div class="a" style="left:146px;top:106px;width:18px;height:14px;background:#f4f4f4;"></div>
<div class="a" style="left:163px;top:120px;width:1px;height:312px;background:#d8d8d8;"></div>
<svg class="a" style="left:147px;top:106px;" width="11" height="11" viewBox="0 0 11 11"><circle cx="5.5" cy="5.5" r="3.4" fill="none" stroke="#4a4a4a" stroke-width="2.2"/><g stroke="#4a4a4a" stroke-width="1.8"><path d="M5.5 0V2.2M5.5 8.8V11M0 5.5H2.2M8.8 5.5H11M1.6 1.6L3.1 3.1M7.9 7.9L9.4 9.4M1.6 9.4L3.1 7.9M7.9 3.1L9.4 1.6"/></g></svg>
<div class="a" style="left:146px;top:120px;width:18px;height:50px;background:#fafafa;border-top:1px solid #d8d8d8;"></div>
<svg class="a" style="left:150px;top:127px;" width="9" height="7" viewBox="0 0 9 7"><rect x="0" y="0" width="2" height="2" fill="#2e6fc0"/><path d="M3 0H9V7H1Z" fill="#888"/><path d="M4 7L8 1" stroke="#fff"/><path d="M5 7L9 2V7Z" fill="#2e6fc0"/></svg>
<div class="t" style="left:158px;top:139px;font-size:6.5px;color:#555;font-weight:normal;font-style:normal;transform-origin:0 0;transform:rotate(90deg);">Редактор</div>
<div class="a" style="left:146px;top:170px;width:17px;height:33px;background:#eeeeee;border-top:1px solid #d8d8d8;border-bottom:1px solid #d8d8d8;"></div>
<svg class="a" style="left:151px;top:176px;" width="9" height="6" viewBox="0 0 9 6"><rect x="0" y="0" width="9" height="6" rx="1" fill="#2ea36a"/><path d="M2.5 1.5L1.5 3L2.5 4.5M6.5 1.5L7.5 3L6.5 4.5M5 1.5L4 4.5" fill="none" stroke="#fff" stroke-width="0.7"/></svg>
<div class="t" style="left:158px;top:187px;font-size:6.2px;color:#555;font-weight:normal;font-style:normal;transform-origin:0 0;transform:rotate(90deg);">XML</div>
<div class="a" style="left:146px;top:202px;width:17px;height:59px;background:#eeeeee;border-bottom:1px solid #d8d8d8;"></div>
<svg class="a" style="left:150px;top:208px;" width="11" height="9" viewBox="0 0 11 9"><path d="M0.5 0.5H4.5L6.5 2.5V8.5H0.5Z" fill="#fff" stroke="#999"/><path d="M8.5 3V8.5M7 2.5L8.5 4.5L10 2.5" fill="none" stroke="#2e6fc0" stroke-width="1.2"/></svg>
<div class="t" style="left:158px;top:219px;font-size:6.5px;color:#555;font-weight:normal;font-style:normal;transform-origin:0 0;transform:rotate(90deg);">Опции темы</div>
<div class="a" style="left:164px;top:106px;width:473px;height:14px;background:#fff;"></div>
<div class="a" style="left:164px;top:119px;width:473px;height:1px;background:#ececec;"></div>
<svg class="a" style="left:164px;top:106px;" width="6" height="13" viewBox="0 0 6 13"><path d="M0.5 0.5H5.5L3 4.5L5.5 8.5H0.5L3 4.5Z" fill="#fff" stroke="#8a8a8a" stroke-width="0.9"/><rect x="0.5" y="9" width="5" height="3.5" fill="#fff" stroke="#8a8a8a" stroke-width="0.9"/><rect x="0" y="1" width="1" height="7" fill="#efe2a8"/></svg>
<svg class="a" style="left:0px;top:106px;" width="640" height="14" viewBox="0 0 640 14"><rect x="170" y="5" width="1" height="1" fill="#555"/><rect x="177" y="5" width="1" height="1" fill="#555"/><rect x="183" y="5" width="1" height="1" fill="#555"/><rect x="189" y="4" width="1" height="2" fill="#666"/><rect x="196" y="5" width="1" height="1" fill="#555"/><rect x="202" y="5" width="1" height="1" fill="#555"/><rect x="208" y="5" width="1" height="1" fill="#555"/><text x="213.4" y="8.6" font-size="6.3" fill="#555" font-family="Liberation Sans">1</text><rect x="221" y="5" width="1" height="1" fill="#555"/><rect x="227" y="5" width="1" height="1" fill="#555"/><rect x="234" y="5" width="1" height="1" fill="#555"/><rect x="240" y="4" width="1" height="2" fill="#666"/><rect x="246" y="5" width="1" height="1" fill="#555"/><rect x="252" y="5" width="1" height="1" fill="#555"/><rect x="259" y="5" width="1" height="1" fill="#555"/><text x="263.9" y="8.6" font-size="6.3" fill="#555" font-family="Liberation Sans">2</text><rect x="271" y="5" width="1" height="1" fill="#555"/><rect x="278" y="5" width="1" height="1" fill="#555"/><rect x="284" y="5" width="1" height="1" fill="#555"/><rect x="290" y="4" width="1" height="2" fill="#666"/><rect x="297" y="5" width="1" height="1" fill="#555"/><rect x="303" y="5" width="1" height="1" fill="#555"/><rect x="309" y="5" width="1" height="1" fill="#555"/><text x="314.4" y="8.6" font-size="6.3" fill="#555" font-family="Liberation Sans">3</text><rect x="322" y="5" width="1" height="1" fill="#555"/><rect x="328" y="5" width="1" height="1" fill="#555"/><rect x="335" y="5" width="1" height="1" fill="#555"/><rect x="341" y="4" width="1" height="2" fill="#666"/><rect x="347" y="5" width="1" height="1" fill="#555"/><rect x="354" y="5" width="1" height="1" fill="#555"/><rect x="360" y="5" width="1" height="1" fill="#555"/><text x="365.0" y="8.6" font-size="6.3" fill="#555" font-family="Liberation Sans">4</text><rect x="373" y="5" width="1" height="1" fill="#555"/><rect x="379" y="5" width="1" height="1" fill="#555"/><rect x="385" y="5" width="1" height="1" fill="#555"/><rect x="391" y="4" width="1" height="2" fill="#666"/><rect x="398" y="5" width="1" height="1" fill="#555"/><rect x="404" y="5" width="1" height="1" fill="#555"/><rect x="410" y="5" width="1" height="1" fill="#555"/><text x="415.6" y="8.6" font-size="6.3" fill="#555" font-family="Liberation Sans">5</text><rect x="423" y="5" width="1" height="1" fill="#555"/><rect x="429" y="5" width="1" height="1" fill="#555"/><rect x="436" y="5" width="1" height="1" fill="#555"/><rect x="442" y="4" width="1" height="2" fill="#666"/><rect x="448" y="5" width="1" height="1" fill="#555"/><rect x="455" y="5" width="1" height="1" fill="#555"/><rect x="461" y="5" width="1" height="1" fill="#555"/><text x="466.1" y="8.6" font-size="6.3" fill="#555" font-family="Liberation Sans">6</text><rect x="474" y="5" width="1" height="1" fill="#555"/><rect x="480" y="5" width="1" height="1" fill="#555"/><rect x="486" y="5" width="1" height="1" fill="#555"/><rect x="493" y="4" width="1" height="2" fill="#666"/><rect x="499" y="5" width="1" height="1" fill="#555"/><rect x="505" y="5" width="1" height="1" fill="#555"/><rect x="512" y="5" width="1" height="1" fill="#555"/><text x="516.6" y="8.6" font-size="6.3" fill="#555" font-family="Liberation Sans">7</text><rect x="524" y="5" width="1" height="1" fill="#555"/><rect x="530" y="5" width="1" height="1" fill="#555"/><rect x="537" y="5" width="1" height="1" fill="#555"/><rect x="543" y="4" width="1" height="2" fill="#666"/><rect x="549" y="5" width="1" height="1" fill="#555"/><rect x="556" y="5" width="1" height="1" fill="#555"/><rect x="562" y="5" width="1" height="1" fill="#555"/><text x="567.2" y="8.6" font-size="6.3" fill="#555" font-family="Liberation Sans">8</text><rect x="575" y="5" width="1" height="1" fill="#555"/><rect x="581" y="5" width="1" height="1" fill="#555"/><rect x="587" y="5" width="1" height="1" fill="#555"/><rect x="594" y="4" width="1" height="2" fill="#666"/><rect x="600" y="5" width="1" height="1" fill="#555"/><rect x="606" y="5" width="1" height="1" fill="#555"/><rect x="613" y="5" width="1" height="1" fill="#555"/><text x="617.8" y="8.6" font-size="6.3" fill="#555" font-family="Liberation Sans">9</text><rect x="625" y="5" width="1" height="1" fill="#555"/><rect x="192" y="10" width="1" height="1" fill="#555"/><rect x="217" y="10" width="1" height="1" fill="#555"/><rect x="243" y="10" width="1" height="1" fill="#555"/><rect x="268" y="10" width="1" height="1" fill="#555"/><rect x="293" y="10" width="1" height="1" fill="#555"/><rect x="319" y="10" width="1" height="1" fill="#555"/><rect x="344" y="10" width="1" height="1" fill="#555"/><rect x="369" y="10" width="1" height="1" fill="#555"/><rect x="394" y="10" width="1" height="1" fill="#555"/><rect x="420" y="10" width="1" height="1" fill="#555"/><rect x="445" y="10" width="1" height="1" fill="#555"/><rect x="470" y="10" width="1" height="1" fill="#555"/><rect x="496" y="10" width="1" height="1" fill="#555"/><rect x="521" y="10" width="1" height="1" fill="#555"/><rect x="546" y="10" width="1" height="1" fill="#555"/><rect x="571" y="10" width="1" height="1" fill="#555"/><rect x="597" y="10" width="1" height="1" fill="#555"/><rect x="622" y="10" width="1" height="1" fill="#555"/></svg>
<svg class="a" style="left:625px;top:111px;" width="7" height="6" viewBox="0 0 7 6"><path d="M0.5 5.5L3.5 0.8L6.5 5.5Z" fill="#fff" stroke="#aaa" stroke-width="0.8"/></svg>
<div class="a" style="left:164px;top:120px;width:463px;height:26px;background:#d0d0d0;"></div>
<div class="t" style="left:167px;top:124px;font-size:11.17px;color:#111;font-weight:bold;font-style:normal;">Introduction for cwer.ru</div>
<svg class="a" style="left:252px;top:133px;" width="25" height="3" viewBox="0 0 25 3"><path d="M0 1.5Q1 0 2 1.5T4 1.5T6 1.5T8 1.5T10 1.5T12 1.5T14 1.5T16 1.5T18 1.5T20 1.5T22 1.5T24 1.5" fill="none" stroke="#e05050" stroke-width="0.7"/></svg>
<div class="t" style="left:167px;top:148px;font-size:7.3px;color:#222;font-weight:normal;font-style:normal;transform:scaleX(0.952);transform-origin:0 0;">Введите текст темы здесь.</div>
<div class="a" style="left:627px;top:120px;width:10px;height:312px;background:#f0f0f0;"></div>
<svg class="a" style="left:629px;top:122px;" width="7" height="5" viewBox="0 0 7 5"><path d="M1 4L3.5 1.5L6 4" fill="none" stroke="#999"/></svg>
<svg class="a" style="left:629px;top:139px;" width="7" height="5" viewBox="0 0 7 5"><path d="M1 1L3.5 3.5L6 1" fill="none" stroke="#999"/></svg>
<svg class="a" style="left:629px;top:149px;" width="7" height="5" viewBox="0 0 7 5"><path d="M1 4L3.5 1.5L6 4" fill="none" stroke="#999"/></svg>
<svg class="a" style="left:629px;top:425px;" width="7" height="5" viewBox="0 0 7 5"><path d="M1 1L3.5 3.5L6 1" fill="none" stroke="#999"/></svg>
<div class="a" style="left:0px;top:434px;width:640px;height:17px;background:#2b579a;"></div>
<div class="a" style="left:0px;top:434px;width:640px;height:1px;background:#1f4a8c;"></div>
<div class="a" style="left:2px;top:436px;width:103px;height:13px;background:#fff;"></div>
<div class="t" style="left:5px;top:440px;font-size:6.7px;color:#9a9a9a;font-weight:normal;font-style:italic;transform:scaleX(1.000);transform-origin:0 0;">Начать поиск</div>
<div class="t" style="left:112px;top:438px;font-size:6.5px;color:#fff;font-weight:normal;font-style:normal;transform:scaleX(1.000);transform-origin:0 0;">Новый объект</div>
<svg class="a" style="left:424px;top:437px;" width="10" height="10" viewBox="0 0 10 10"><path d="M0.5 9L3.5 0.5L4.5 3" fill="none" stroke="#c8403a" stroke-width="1.2"/><path d="M3 9.5L6 1L9 9.5" fill="none" stroke="#1d3f7a" stroke-width="1.3"/></svg>
<div class="t" style="left:434px;top:439px;font-size:6.5px;color:#fff;font-weight:normal;font-style:normal;transform:scaleX(1.022);transform-origin:0 0;">Экран</div>
<div class="a" style="left:461px;top:441px;width:4px;height:1px;background:#667ca6;"></div>
<div class="a" style="left:470px;top:441px;width:71px;height:1px;background:#8a9bbb;"></div>
<div class="a" style="left:505px;top:437px;width:3px;height:9px;background:#a39f8e;"></div>
<svg class="a" style="left:545px;top:438px;" width="5" height="5" viewBox="0 0 5 5"><path d="M2.5 0V5M0 2.5H5" stroke="#667ca6"/></svg>
<div class="t" style="left:561px;top:439px;font-size:6.4px;color:#fff;font-weight:normal;font-style:normal;transform:scaleX(0.953);transform-origin:0 0;">100%</div>
<div class="t" style="left:584px;top:439px;font-size:6.4px;color:#7f97c2;font-weight:normal;font-style:normal;transform:scaleX(0.901);transform-origin:0 0;">Caps</div>
<div class="t" style="left:601px;top:439px;font-size:6.5px;color:#fff;font-weight:normal;font-style:normal;transform:scaleX(1.016);transform-origin:0 0;">Num</div>
<div class="t" style="left:618px;top:439px;font-size:6.4px;color:#7f97c2;font-weight:normal;font-style:normal;transform:scaleX(0.972);transform-origin:0 0;">Scr</div>
</body></html>
